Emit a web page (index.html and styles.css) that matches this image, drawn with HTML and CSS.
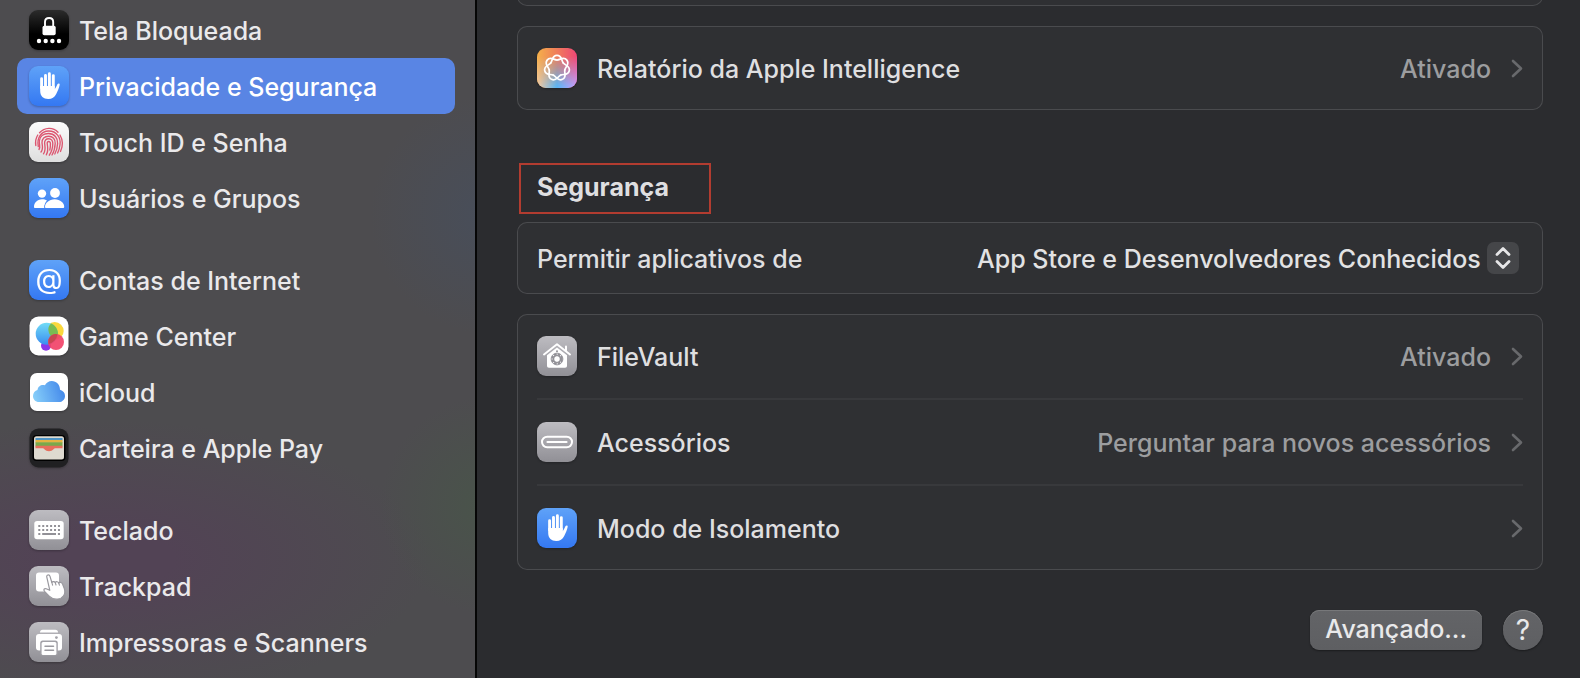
FILE: index.html
```html
<!DOCTYPE html>
<html lang="pt-BR">
<head>
<meta charset="utf-8">
<meta name="viewport" content="width=device-width, initial-scale=1">
<title>Privacidade e Segurança</title>
<link rel="stylesheet" href="styles.css">
</head>
<body>
<svg class="defs" width="0" height="0" aria-hidden="true">
  <defs>
    <linearGradient id="blue" x1="0" y1="0" x2="0" y2="1"><stop offset="0" stop-color="#5fa2f8"/><stop offset="1" stop-color="#3478f2"/></linearGradient>
    <linearGradient id="gray" x1="0" y1="0" x2="0" y2="1"><stop offset="0" stop-color="#bdbcc1"/><stop offset="1" stop-color="#919096"/></linearGradient>
    <linearGradient id="black" x1="0" y1="0" x2="0" y2="1"><stop offset="0" stop-color="#2c2c2c"/><stop offset=".6" stop-color="#000"/></linearGradient>
    <linearGradient id="white" x1="0" y1="0" x2="0" y2="1"><stop offset="0" stop-color="#fcfcfc"/><stop offset="1" stop-color="#dedede"/></linearGradient>
    <linearGradient id="cloud" x1="0" y1=".6" x2="1" y2=".4"><stop offset="0" stop-color="#85cdf9"/><stop offset="1" stop-color="#4287ea"/></linearGradient>
    <linearGradient id="bubble" x1="0" y1="0" x2="0" y2="1"><stop offset="0" stop-color="#72dcf6"/><stop offset="1" stop-color="#3a8df0"/></linearGradient>
    <linearGradient id="ai" x1="0" y1="0" x2="1" y2="0"><stop offset="0" stop-color="#f5b04a"/><stop offset=".45" stop-color="#f08258"/><stop offset="1" stop-color="#ee4676"/></linearGradient>
    <linearGradient id="ai2" x1="0" y1="0" x2="1" y2="0"><stop offset="0" stop-color="#f6c9a0"/><stop offset=".5" stop-color="#5bb4f2"/><stop offset="1" stop-color="#c79cf8"/></linearGradient>
    <linearGradient id="fade" x1="0" y1="0" x2="0" y2="1"><stop offset=".2" stop-color="#000"/><stop offset=".95" stop-color="#fff"/></linearGradient>
    <mask id="down"><rect width="40" height="40" fill="url(#fade)"/></mask>
    <g id="hand" fill="#fff" stroke="#fff" stroke-linecap="round">
      <path d="M12.6 12.8V22M16.5 9.4V21M20.4 7.8V21M24.3 9.6V22" stroke-width="2.9" fill="none"/>
      <path d="M11.2 20H25.7V23.2C26.8 22 27.7 19.7 28.4 18.3C29.1 17 30.9 17.3 30.7 18.7C30.2 21.6 28.6 25.2 27.2 28C25.5 31.5 23 33 19.3 33C14.4 33 11.2 30.3 11.2 25Z" stroke="none"/>
    </g>
    <path id="chev" d="M2 2L10 9.5L2 17" fill="none" stroke="#68696c" stroke-width="2.6" stroke-linecap="round" stroke-linejoin="round"/>
    <path id="petal" d="M13.75 15.01C15.9 12.3 14.8 7.4 20 7.4S24.1 12.3 26.25 15.01"/>
  </defs>
</svg>
<div class="window">
  <nav class="sidebar" aria-label="Ajustes">
    <ul class="group">
      <li><a class="item" href="#tela"><svg class="icon" viewBox="0 0 40 40"><rect width="40" height="40" rx="9" fill="url(#black)"/><rect x="13.5" y="15.8" width="13.2" height="9.5" rx="1.8" fill="#fff"/><path d="M16 17V12C16 6.7 24.2 6.7 24.2 12V17" fill="none" stroke="#fff" stroke-width="1.9"/><g fill="#fff"><circle cx="10" cy="31" r="2.2"/><circle cx="16.7" cy="31" r="2.2"/><circle cx="23.4" cy="31" r="2.2"/><circle cx="30" cy="31" r="2.2"/></g></svg><span>Tela Bloqueada</span></a></li>
      <li><a class="item selected" href="#privacidade" aria-current="page"><svg class="icon" viewBox="0 0 40 40"><rect width="40" height="40" rx="9" fill="url(#blue)"/><use href="#hand"/></svg><span>Privacidade e Segurança</span></a></li>
      <li><a class="item" href="#touch"><svg class="icon" viewBox="0 0 40 40"><rect width="40" height="40" rx="9" fill="url(#white)"/><g fill="none" stroke="#dc5670" stroke-width="1.35" stroke-linecap="round"><path d="M10.5 10.8C15.5 5.3 24 4.8 29 10.2M31 13C34.2 18.5 34 24 31.5 29.5M8.8 13C6.5 16.5 6.2 19.5 6.8 23.5"/><path d="M9.3 24.5C7.5 15 13 9.2 19.5 9C27.5 8.8 32 15.5 31 22.5C30.7 26 29.8 28.5 28.6 31"/><path d="M10 27.5C11.8 25 10 22.5 10.3 19C10.8 14 15 11.5 19.5 11.5C25.5 11.5 29 16 28.6 21.5C28.4 26 27.3 29.5 25.8 32"/><path d="M12 30C14.5 27 13.3 23.8 13 20.8C12.7 17 15.5 14.2 19.5 14.2C24 14.2 26.4 17.3 26.2 21.5C26 26 25 29.8 23 33"/><path d="M14.5 31.8C17 28.3 16 24.5 15.6 21.2C15.4 18.5 17 16.7 19.6 16.7C22.5 16.7 23.9 18.8 23.8 21.8C23.7 26 22.5 30 20.3 33.2"/><path d="M17.3 32.8C19.5 29.5 18.8 25 18.2 21.5C18 19 21.3 18.7 21.4 21.5C21.5 24 21.2 26 20.8 28"/></g></svg><span>Touch ID e Senha</span></a></li>
      <li><a class="item" href="#usuarios"><svg class="icon" viewBox="0 0 40 40"><rect width="40" height="40" rx="9" fill="url(#blue)"/><g fill="#fff"><circle cx="13" cy="15.6" r="4.2"/><circle cx="26" cy="15" r="4.9"/><path d="M18 22.5C16.5 21.6 15 21.2 13 21.2C8 21.2 5 25 5 28.8C5 29.7 5.4 30 6 30H15.3C15.2 26.7 16.2 24.2 18 22.5Z"/><path d="M17.3 30C16.3 30 16 29.5 16 28.7C16 25.3 20 21.3 25.7 21.3S35.2 25.3 35.2 28.7C35.2 29.5 34.8 30 34 30Z" stroke="#4585f4" stroke-width="1" paint-order="stroke"/></g></svg><span>Usuários e Grupos</span></a></li>
    </ul>
    <ul class="group">
      <li><a class="item" href="#contas"><svg class="icon" viewBox="0 0 40 40" aria-hidden="true"><rect width="40" height="40" rx="9" fill="url(#blue)"/><text class="at" x="20" y="29" text-anchor="middle">@</text></svg><span>Contas de Internet</span></a></li>
      <li><a class="item" href="#game"><svg class="icon" viewBox="0 0 40 40"><rect x=".5" y=".5" width="39" height="39" rx="9" fill="#fff"/><circle cx="17" cy="29.8" r="5" fill="#8b35e8"/><circle cx="25.7" cy="15" r="9" fill="#fbd83d"/><circle cx="17.7" cy="17.7" r="11" fill="url(#bubble)"/><path d="M22 7.6A11 11 0 0 1 27.8 22.9A9 9 0 0 1 22 7.6Z" fill="#79bd52"/><circle cx="27" cy="26" r="8" fill="#f14368" opacity=".92"/><path d="M19.5 23.4A8 8 0 0 1 28.3 18.2A11 11 0 0 1 19.5 28Z" fill="#c84750"/></svg><span>Game Center</span></a></li>
      <li><a class="item" href="#icloud"><svg class="icon" viewBox="0 0 40 40"><rect x="1" y="1" width="38" height="38" rx="7" fill="#fff"/><path d="M10 30C6.3 30 4 27.3 4 24C4 20.8 6 18.6 8.5 17.9C8.8 14.3 12.6 12 15.9 13.3C17.3 10.6 19.8 9 22.7 9C27.5 9 31 12.7 31 17.8C34 18.6 36 21 36 23.9C36 27.3 33.4 30 30 30Z" fill="url(#cloud)"/></svg><span>iCloud</span></a></li>
      <li><a class="item" href="#carteira"><svg class="icon" viewBox="0 0 40 40"><rect x=".5" y=".5" width="39" height="39" rx="9" fill="#202022"/><rect x="3.5" y="7" width="33" height="26" rx="4" fill="#000"/><rect x="5" y="8.2" width="30" height="23.3" rx="2.5" fill="#dedad0"/><path d="M6.5 10H33.5V12.3H6.5Z" fill="#4f94c4"/><path d="M6.5 12H33.5V14.8H6.5Z" fill="#e4b341"/><path d="M6.5 14.3H33.5V18.5H6.5Z" fill="#79a94b"/><path d="M6.5 17.8H33.5V20.3H26C24.5 20.3 24.2 23.3 20 23.3S15.5 20.3 14 20.3H6.5Z" fill="#e76d5c"/></svg><span>Carteira e Apple Pay</span></a></li>
    </ul>
    <ul class="group">
      <li><a class="item" href="#teclado"><svg class="icon" viewBox="0 0 40 40"><rect width="40" height="40" rx="9" fill="url(#gray)"/><rect x="5.3" y="11" width="29.4" height="18.3" rx="2.8" fill="#fff"/><g stroke="#929197" stroke-width="2" fill="none"><path d="M9.3 16H32" stroke-dasharray="2 1.93"/><path d="M9.3 20H32" stroke-dasharray="2 1.93"/><path d="M9.3 23.9H11.3M13.2 23.9H27M28.9 23.9H31"/></g></svg><span>Teclado</span></a></li>
      <li><a class="item" href="#trackpad"><svg class="icon" viewBox="0 0 40 40"><rect width="40" height="40" rx="9" fill="url(#gray)"/><rect x="7" y="6.5" width="23" height="19" rx="3" fill="#fff"/><path d="M17.8 11.2C17.1 8.7 20.3 8 21 10.4L22.8 16.4C23.8 15.1 25.6 15.5 26.2 16.5C27.2 15.2 29.1 15.6 29.7 17C31.3 15.9 33 16.5 33.6 18.2L35.2 22.3C37.4 28.5 33.4 32.4 29 33C25.3 33.5 22.5 32.5 20.2 30.2L15.5 25.3C14 23.6 15.4 22.2 17.2 22.8L20.8 24.3Z" fill="#fff" stroke="#99989e" stroke-width="1.2" stroke-linejoin="round"/><path d="M22.8 16.3L23.6 19.2M26.2 16.5L27 19M29.7 17L30.4 19.2" stroke="#99989e" stroke-width="1.1" stroke-linecap="round"/></svg><span>Trackpad</span></a></li>
      <li><a class="item" href="#impressoras"><svg class="icon" viewBox="0 0 40 40"><rect width="40" height="40" rx="9" fill="url(#gray)"/><path d="M11 10.5C11 8.7 12 7.8 13.7 7.8H26.3C28 7.8 29 8.7 29 10.5Z" fill="#fff"/><rect x="7" y="12" width="26" height="16.5" rx="3" fill="#fff"/><rect x="11.2" y="18.4" width="17.6" height="15" rx="2.5" fill="#a2a1a7"/><rect x="12.6" y="20" width="14.8" height="13" rx="1.5" fill="#fff"/><path d="M16 24.3H24.5M16 28.3H24.5" stroke="#99989e" stroke-width="1.5" stroke-linecap="round"/><circle cx="27.4" cy="15.6" r="1.4" fill="#a2a1a7"/></svg><span>Impressoras e Scanners</span></a></li>
    </ul>
  </nav>
  <main class="panel">
    <div class="content">
      <section class="card scrolled"></section>
      <section class="card">
        <a class="row" href="#relatorio"><svg class="icon" viewBox="0 0 40 40"><rect width="40" height="40" rx="9" fill="url(#ai)"/><rect width="40" height="40" rx="9" fill="url(#ai2)" mask="url(#down)"/><g fill="none" stroke="#fff" stroke-width="1.7" stroke-linecap="round"><use href="#petal"/><use href="#petal" transform="rotate(51.43 20 20)"/><use href="#petal" transform="rotate(102.86 20 20)"/><use href="#petal" transform="rotate(154.29 20 20)"/><use href="#petal" transform="rotate(205.71 20 20)"/><use href="#petal" transform="rotate(257.14 20 20)"/><use href="#petal" transform="rotate(308.57 20 20)"/></g></svg><span class="name">Relatório da Apple Intelligence</span><span class="value">Ativado</span><svg class="chevron" viewBox="0 0 12 19"><use href="#chev"/></svg></a>
      </section>
      <h2 class="heading">Segurança</h2>
      <section class="card setting">
        <label for="apps">Permitir aplicativos de</label>
        <span class="popup">
          <select id="apps"><option>App Store e Desenvolvedores Conhecidos</option><option>App Store</option></select>
          <svg class="stepper" viewBox="0 0 32 32" aria-hidden="true"><rect width="32" height="32" rx="7" fill="#454649"/><path d="M10 12.5L16 6.5L22 12.5M10 19.5L16 25.5L22 19.5" fill="none" stroke="#e6e6e7" stroke-width="2.8" stroke-linecap="round" stroke-linejoin="round"/></svg>
        </span>
      </section>
      <section class="card">
        <a class="row" href="#filevault"><svg class="icon" viewBox="0 0 40 40"><rect width="40" height="40" rx="9" fill="url(#gray)"/><path d="M7 18.5L20 8.2L33 18.5M29 14.5V10.5" fill="none" stroke="#fff" stroke-width="2" stroke-linecap="round" stroke-linejoin="round"/><path d="M10 19.3L20 11.5L30 19.3V29.5C30 31 29.3 31.7 28 31.7H12C10.7 31.7 10 31 10 29.5Z" fill="#fff"/><circle cx="20" cy="23" r="4.7" fill="none" stroke="#929197" stroke-width="2.2" stroke-dasharray="2.9 .79"/><circle cx="20" cy="23" r="3.4" fill="none" stroke="#929197" stroke-width="1.4"/><circle cx="20" cy="23" r="5.9" fill="none" stroke="#929197" stroke-width=".9"/><path d="M20 20.3L22.5 23L20 25.7L17.5 23Z" fill="#fff"/><circle cx="20" cy="15.3" r="1" fill="#929197"/></svg><span class="name">FileVault</span><span class="value">Ativado</span><svg class="chevron" viewBox="0 0 12 19"><use href="#chev"/></svg></a>
        <a class="row" href="#acessorios"><svg class="icon" viewBox="0 0 40 40"><rect width="40" height="40" rx="9" fill="url(#gray)"/><rect x="5" y="14.8" width="30" height="10.4" rx="5.2" fill="none" stroke="#fff" stroke-width="2"/><path d="M10.5 20H29.5" stroke="#fff" stroke-width="2.2" stroke-linecap="round"/></svg><span class="name">Acessórios</span><span class="value">Perguntar para novos acessórios</span><svg class="chevron" viewBox="0 0 12 19"><use href="#chev"/></svg></a>
        <a class="row" href="#isolamento"><svg class="icon" viewBox="0 0 40 40"><rect width="40" height="40" rx="9" fill="url(#blue)"/><use href="#hand"/></svg><span class="name">Modo de Isolamento</span><svg class="chevron" viewBox="0 0 12 19"><use href="#chev"/></svg></a>
      </section>
      <div class="actions">
        <button class="button" type="button">Avançado...</button>
        <button class="help" type="button" aria-label="Ajuda">?</button>
      </div>
    </div>
  </main>
</div>
</body>
</html>
```
FILE: styles.css
```css
* { box-sizing: border-box; }

body {
  margin: 0;
  background: #2b2c2f;
  color: #dfdfe0;
  font: 500 25px/32px Inter, "Liberation Sans", sans-serif;
}

a { color: inherit; text-decoration: none; }

.defs { position: absolute; }

.window {
  display: flex;
  height: 100vh;
  overflow: hidden;
}

.sidebar {
  flex: none;
  display: flex;
  flex-direction: column;
  gap: 26px;
  width: 477px;
  padding: 2px 20px 8px 17px;
  border-right: 2px solid #060606;
  color: #eae9eb;
  background:
    radial-gradient(circle at 490px 215px, #484e5a 0, #484e5a00 120px),
    radial-gradient(circle at 490px 505px, #49544a 0, #49544a00 110px),
    radial-gradient(ellipse 320px 140px at 110px 560px, #524355 20%, #52435500 100%),
    #4d4c4f;
}

.group { margin: 0; padding: 0; list-style: none; }

.item {
  display: flex;
  align-items: center;
  gap: 10px;
  padding: 8px 12px;
  border-radius: 10px;
}

.item.selected { background: #5985e4; color: #fff; }

.icon {
  flex: none;
  width: 40px;
  height: 40px;
  filter: drop-shadow(0 1px 1px #0004);
}

.at { font: 28px Inter, sans-serif; fill: #fff; }

.item span,
.name,
.value,
.setting label,
.popup select { padding-top: 2px; }

.panel { flex: 1; min-width: 0; overflow: hidden; }

.content {
  display: flex;
  flex-direction: column;
  gap: 20px;
  margin-top: -78px;
  padding: 0 37px 28px 40px;
}

.card {
  padding: 0 20px;
  border-radius: 10px;
  background: #2f3033;
  box-shadow: inset 0 0 0 1px #4a4b4e;
}

.scrolled { height: 84px; }

.row {
  display: flex;
  align-items: center;
  padding: 22px 0;
}

.row + .row { border-top: 2px solid #38393c; }

.name { flex: 1; padding-left: 20px; }

.value { color: #9c9d9f; }

.chevron { flex: none; width: 12px; height: 19px; margin-left: 20px; }

.heading {
  align-self: flex-start;
  min-width: 192px;
  margin: 33px 0 -12px 2px;
  padding: 6px 16px 9px;
  border: 2px solid #b23c30;
  font-size: 25px;
  font-weight: 700;
  line-height: 32px;
}

.setting {
  display: flex;
  align-items: center;
  justify-content: space-between;
  padding: 19px 24px 19px 20px;
}

.popup { position: relative; display: flex; }

.popup select {
  appearance: none;
  height: 34px;
  padding-right: 38px;
  padding-bottom: 0;
  padding-left: 0;
  border: 0;
  background: none;
  color: #e2e2e3;
  font: inherit;
}

.stepper {
  position: absolute;
  top: 1px;
  right: 0;
  width: 32px;
  height: 32px;
  pointer-events: none;
}

.actions {
  display: flex;
  justify-content: flex-end;
  gap: 21px;
  margin-top: 20px;
}

.button,
.help {
  height: 40px;
  border: 0;
  background: linear-gradient(#636467, #5e5f62);
  box-shadow: inset 0 1px 0 #77787a, 0 1px 2px #0006;
  color: #e9e9ea;
  font: inherit;
}

.button { padding: 0 15px 2px; border-radius: 9px; }

.help { width: 40px; padding: 0; border-radius: 50%; font-size: 28px; font-weight: 400; }
```
